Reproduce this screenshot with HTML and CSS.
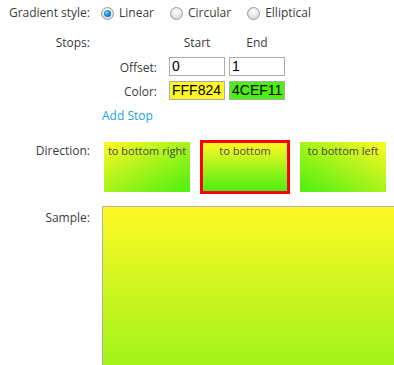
FILE: index.html
```html
<!DOCTYPE html>
<html>
<head>
<meta charset="utf-8">
<link rel="stylesheet" href="styles.css">
</head>
<body>
<div class="form">
  <div class="row row-style">
    <div class="label">Gradient style:</div>
    <div class="content radios">
      <label class="radio"><span class="dot checked"></span>Linear</label>
      <label class="radio"><span class="dot"></span>Circular</label>
      <label class="radio"><span class="dot"></span>Elliptical</label>
    </div>
  </div>

  <div class="row row-stops">
    <div class="label">Stops:</div>
    <div class="content">
      <div class="stops">
        <div></div>
        <div class="head">Start</div>
        <div class="head">End</div>
        <div class="sublabel">Offset:</div>
        <div class="field">0</div>
        <div class="field">1</div>
        <div class="sublabel">Color:</div>
        <div class="field color-a">FFF824</div>
        <div class="field color-b">4CEF11</div>
      </div>
      <div class="add">Add Stop</div>
    </div>
  </div>

  <div class="row row-dir">
    <div class="label lbl-dir">Direction:</div>
    <div class="content tiles">
      <div class="slot"><div class="tile g-br">to bottom right</div></div>
      <div class="slot"><div class="tile g-b selected">to bottom</div></div>
      <div class="slot"><div class="tile g-bl">to bottom left</div></div>
    </div>
  </div>

  <div class="row row-sample">
    <div class="label lbl-sample">Sample:</div>
    <div class="content">
      <div class="sample"></div>
    </div>
  </div>
</div>
</body>
</html>
```

FILE: styles.css
```css
html, body {
  margin: 0;
  padding: 0;
  overflow: hidden;
  background: #fff;
}
body {
  font-family: "Open Sans", "Noto Sans", sans-serif;
  font-size: 12px;
  line-height: 16px;
  color: #3b3b3b;
  padding: 5px 0 0 8px;
  height: 365px;
  box-sizing: border-box;
}
.row {
  display: flex;
  column-gap: 12px;
}
.label {
  width: 82px;
  flex: none;
  text-align: right;
  white-space: nowrap;
}
.content {
  flex: none;
}
.radios {
  display: flex;
  column-gap: 17px;
}
.radio {
  display: flex;
  align-items: center;
  column-gap: 5px;
}
.dot {
  width: 11px;
  height: 11px;
  border-radius: 50%;
  border: 1px solid #9a9a9a;
  background: radial-gradient(circle at 50% 35%, #ffffff 0%, #e6e6e6 55%, #c8c8c8 100%);
  position: relative;
  margin-left: -1px;
}
.dot.checked::after {
  content: "";
  position: absolute;
  left: 2px;
  top: 2px;
  width: 7px;
  height: 7px;
  border-radius: 50%;
  background: radial-gradient(circle at 40% 35%, #7fd8ff 0%, #1a8fd0 45%, #0a4f80 100%);
}
.row-stops {
  margin-top: 14px;
}
.stops {
  display: grid;
  grid-template-columns: 63px 56px 56px;
  grid-template-rows: 17px 19px 19px;
  column-gap: 4px;
  row-gap: 5px;
}
.stops .head {
  text-align: center;
}
.sublabel {
  text-align: right;
  padding-right: 8px;
  align-self: center;
  padding-top: 2px;
}
.field {
  box-sizing: border-box;
  height: 19px;
  border: 1px solid #ababab;
  background: #fff;
  font-family: "Liberation Sans", Arial, sans-serif;
  font-size: 14px;
  line-height: 17px;
  color: #000;
  padding-left: 2px;
}
.color-a { background: #fff824; }
.color-b { background: #4cef11; }
.add {
  color: #1ba1e2;
  margin-top: 8px;
}
.row-dir {
  margin-top: 16px;
}
.lbl-dir {
  margin-top: 3px;
}
.tiles {
  display: flex;
  column-gap: 8px;
}
.slot {
  width: 90px;
  height: 54px;
  box-sizing: border-box;
  padding: 2px;
}
.tile {
  box-sizing: border-box;
  width: 86px;
  height: 50px;
  text-align: center;
  color: #4a4a4a;
  white-space: nowrap;
  font-size: 11px;
  padding-top: 1px;
}
.tile.selected {
  width: 90px;
  height: 54px;
  margin: -2px;
  border: 3px solid #ff0000;
  padding-top: 0;
}
.g-br { background: linear-gradient(to bottom right, #fff824, #4cef11); }
.g-b  { background: linear-gradient(to bottom, #fff824, #4cef11); }
.g-bl { background: linear-gradient(to bottom left, #fff824, #4cef11); }
.row-sample {
  margin-top: 12px;
}
.lbl-sample {
  margin-top: 4px;
}
.sample {
  width: 291px;
  height: 158px;
  border-top: 1px solid #b0b0b0;
  border-left: 1px solid #b0b0b0;
  background: linear-gradient(to bottom, #fff824, #4cef11) top left / 100% 300px no-repeat;
}
```
